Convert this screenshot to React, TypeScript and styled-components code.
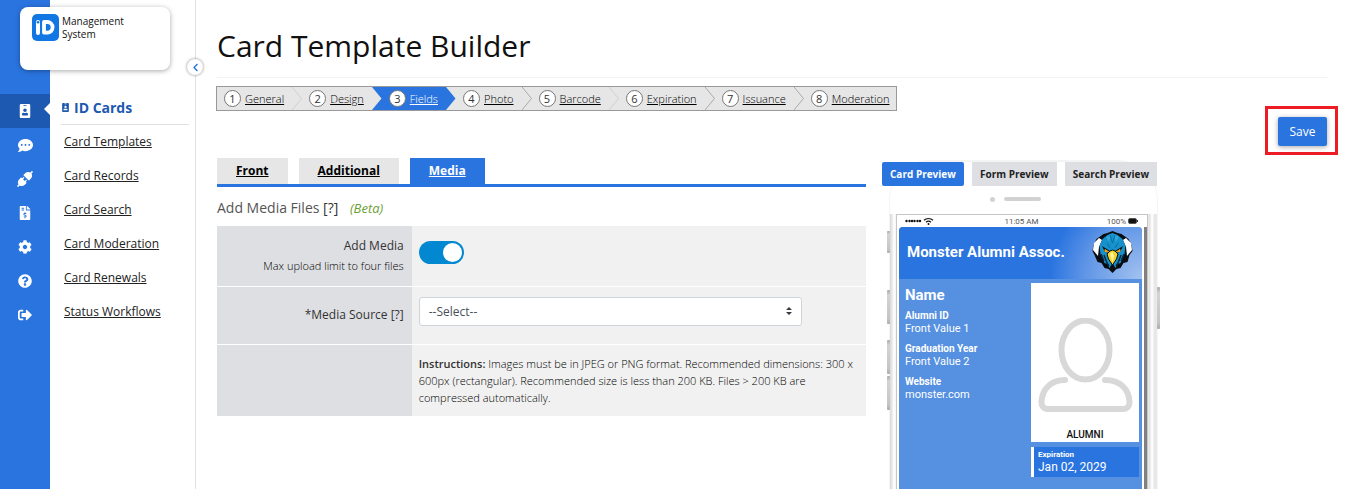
import React, { useState } from "react";
import styled, { createGlobalStyle } from "styled-components";
import {
  FaIdBadge,
  FaCommentDots,
  FaFileInvoiceDollar,
  FaCog,
  FaQuestionCircle,
  FaSignOutAlt,
  FaChevronLeft,
} from "react-icons/fa";
import { AiFillApi } from "react-icons/ai";

const blue = "#2a74e0";
const darkBlue = "#1d59b0";

const GlobalStyle = createGlobalStyle`
  * { box-sizing: border-box; }
  body { margin: 0; font-family: "Open Sans", sans-serif; font-size: 12px; color: #333; background: #fff; }
  button, select, input { font: inherit; }
`;

const Shell = styled.div`
  display: flex;
  position: relative;
  height: 100vh;
  overflow: hidden;
`;

const Rail = styled.nav`
  flex: 0 0 50px;
  padding-top: 94px;
  background: ${blue};
`;

const RailLink = styled.a<{ $active?: boolean }>`
  position: relative;
  display: flex;
  align-items: center;
  justify-content: center;
  height: 34px;
  color: #fff;
  font-size: 14px;
  background: ${(p) => (p.$active ? darkBlue : "transparent")};
  &::after {
    content: "";
    display: ${(p) => (p.$active ? "block" : "none")};
    position: absolute;
    right: 0;
    top: 9px;
    border: solid transparent;
    border-width: 6px 6px 6px 0;
    border-right-color: #fff;
  }
`;

const BrandCard = styled.header`
  position: absolute;
  left: 20px;
  top: 7px;
  display: flex;
  gap: 3px;
  width: 150px;
  height: 63px;
  padding: 7px 12px;
  border-radius: 8px;
  background: #fff;
  box-shadow: 0 1px 5px rgba(0, 0, 0, 0.35);
  color: #111;
  font-size: 10px;
  line-height: 13px;
`;

const BrandName = styled.span`
  padding-top: 1px;
`;

const Side = styled.aside`
  position: relative;
  flex: 0 0 146px;
  padding: 96px 6px 0 11px;
  border-right: 1px solid #e2e2e2;
`;

const SideTitle = styled.h2`
  display: flex;
  align-items: center;
  gap: 4px;
  height: 29px;
  margin: 0;
  padding-bottom: 5px;
  border-bottom: 1px solid #e0e0e0;
  color: ${darkBlue};
  font-size: 14px;
  font-weight: 700;
  & svg { font-size: 9px; }
`;

const SideLink = styled.a`
  display: block;
  padding-left: 3px;
  line-height: 34px;
  color: #222;
  font-size: 12px;
`;

const Collapse = styled.button`
  position: absolute;
  right: -8px;
  top: 59px;
  display: grid;
  place-items: center;
  width: 16px;
  height: 16px;
  padding: 0;
  border: 0;
  border-radius: 50%;
  background: #fff;
  box-shadow: 0 0 3px rgba(0, 0, 0, 0.5);
  color: ${blue};
  font-size: 9px;
`;

const Main = styled.main`
  flex: 1;
  min-width: 0;
  padding: 16px 20px 0 21px;
`;

const PageTitle = styled.h1`
  margin: 0;
  height: 62px;
  border-bottom: 1px solid #f3f3f3;
  color: #111;
  font-size: 30px;
  font-weight: 400;
  line-height: 60px;
`;

const TopRow = styled.div`
  display: flex;
  justify-content: space-between;
  align-items: flex-start;
  height: 80px;
  padding-top: 8px;
`;

const Steps = styled.nav`
  display: flex;
  height: 25px;
  margin-left: -1px;
  border: 1px solid #999;
  background: #e6e6e6;
`;

const Step = styled.div<{ $active?: boolean; $last?: boolean }>`
  display: flex;
  align-items: center;
  gap: 4px;
  padding: 0 ${(p) => (p.$last ? 7 : 8)}px 0 7px;
  background: ${(p) => (p.$active ? blue : "#e6e6e6")};
  font-size: 11px;
  font-weight: 300;
  & a { color: ${(p) => (p.$active ? "#fff" : "#000")}; }
`;

const StepNumber = styled.span`
  display: grid;
  place-items: center;
  width: 17px;
  height: 17px;
  border: 1px solid #777;
  border-radius: 50%;
  background: #fff;
  color: #333;
  font-weight: 400;
  line-height: 15px;
`;

const SaveFrame = styled.div`
  margin: 20px -11px 0 0;
  padding: 8px 8px 6px 10px;
  border: 3px solid #ed1c24;
`;

const SaveButton = styled.button`
  display: block;
  width: 49px;
  height: 29px;
  padding: 0;
  border: 0;
  border-radius: 2px;
  background: ${blue};
  box-shadow: 0 1px 5px rgba(0, 0, 0, 0.35);
  color: #fff;
  font-size: 12px;
`;

const Columns = styled.div`
  display: grid;
  grid-template-columns: minmax(0, 649px) 275px;
  column-gap: 16px;
  align-items: start;
`;

const Tabs = styled.div`
  display: flex;
  gap: 11px;
  border-bottom: 3px solid ${blue};
`;

const Tab = styled.a<{ $active?: boolean }>`
  padding: 0 19px;
  background: ${(p) => (p.$active ? blue : "#e6e6e6")};
  color: ${(p) => (p.$active ? "#fff" : "#000")};
  font-weight: 700;
  line-height: 26px;
`;

const SectionTitle = styled.h3`
  margin: 0;
  color: #555;
  font-size: 14px;
  font-weight: 400;
  line-height: 41px;
  height: 39px;
`;

const HelpLink = styled.a`
  color: #333;
  text-decoration: none;
`;

const Beta = styled.em`
  margin-left: 8px;
  color: #6ba134;
  font-size: 13px;
`;

const FieldTable = styled.table`
  width: 100%;
  border-collapse: collapse;
  table-layout: fixed;
`;

const FieldRow = styled.tr<{ $height: number }>`
  height: ${(p) => p.$height}px;
  & + & { border-top: 1px solid #fff; }
`;

const FieldName = styled.th`
  width: 30%;
  padding: 0 8px 0 0;
  background: #dedfe3;
  font-weight: 400;
  text-align: right;
  line-height: 20px;
`;

const FieldValue = styled.td`
  padding: 0 7px;
  background: #f1f1f1;
`;

const Hint = styled.div`
  color: #000;
  font-size: 11px;
  font-weight: 300;
`;

const Switch = styled.input`
  display: block;
  appearance: none;
  width: 45px;
  height: 23px;
  margin: 0 0 7px;
  padding: 2px;
  border-radius: 12px;
  background: #aaa;
  &::before {
    content: "";
    display: block;
    width: 19px;
    height: 19px;
    border-radius: 50%;
    background: #fff;
  }
  &:checked { background: #0288d1; }
  &:checked::before { margin-left: 22px; }
`;

const SelectBox = styled.div`
  display: grid;
  align-items: center;
  width: 383px;
  max-width: 100%;
  margin-bottom: 8px;
  & > * { grid-area: 1 / 1; }
  & svg { justify-self: end; margin-right: 10px; pointer-events: none; }
`;

const Select = styled.select`
  appearance: none;
  width: 100%;
  height: 29px;
  padding: 0 9px;
  border: 1px solid #ced4da;
  border-radius: 3px;
  background: #fff;
  color: #495057;
`;

const Instructions = styled.p`
  margin: 0;
  color: #000;
  font-size: 11px;
  font-weight: 300;
  line-height: 17px;
  & b { color: #333; font-weight: 600; }
`;

const Preview = styled.section`
  padding-top: 4px;
`;

const PreviewTabs = styled.div`
  position: relative;
  z-index: 1;
  display: flex;
  justify-content: space-between;
`;

const PreviewTab = styled.button<{ $active?: boolean }>`
  height: 24px;
  padding: 0 8px;
  border: 0;
  border-radius: ${(p) => (p.$active ? 2 : 0)}px;
  background: ${(p) => (p.$active ? blue : "#dedfe3")};
  color: ${(p) => (p.$active ? "#fff" : "#222")};
  font-size: 10px;
  font-weight: 700;
  white-space: nowrap;
`;

const Phone = styled.div`
  position: relative;
  width: 269px;
  margin: -26px 0 0 7px;
  border: solid #f4f4f4;
  border-width: 2px 1px 0;
  border-radius: 40px 40px 0 0;
`;

const Speaker = styled.div`
  display: flex;
  align-items: center;
  gap: 9px;
  height: 52px;
  padding: 22px 0 0 100px;
  &::before { content: ""; width: 5px; height: 5px; border-radius: 50%; background: #d2d2d2; }
  &::after { content: ""; width: 37px; height: 4px; border-radius: 2px; background: #d2d2d2; }
`;

const SideKey = styled.i<{ $top: number; $height: number; $right?: boolean }>`
  position: absolute;
  top: ${(p) => p.$top}px;
  ${(p) => (p.$right ? "right: -3px" : "left: -3px")};
  width: 3px;
  height: ${(p) => p.$height}px;
  border-radius: 1px;
  background: linear-gradient(#aaa, #d4d4d4 15%, #c4c4c4 85%, #aaa);
`;

const Chassis = styled.div`
  padding: 0 9px 0 6px;
  background: linear-gradient(90deg, #d8d8d8 0, #e8e8e8 2px, #fff 4px, #f3f3f3 6px, #f3f3f3 calc(100% - 9px), #ddd calc(100% - 8px), #fff calc(100% - 5px), #e4e4e4 calc(100% - 2px), #ececec 100%);
`;

const Screen = styled.div`
  border: 1px solid #c6c6c6;
  border-bottom: 0;
  background: #fff;
  font-family: Roboto, sans-serif;
`;

const StatusBar = styled.div`
  display: grid;
  grid-template-columns: 1fr auto 1fr;
  align-items: center;
  height: 12px;
  padding: 0 9px 0 8px;
  color: #555;
  font-size: 8px;
`;

const Battery = styled.span`
  display: flex;
  align-items: center;
  justify-content: flex-end;
  gap: 2px;
`;

const Scroller = styled.div`
  padding: 0 2px;
  border-right: 3px solid #808080;
`;

const MemberCard = styled.article`
  height: 420px;
  border-radius: 4px 4px 0 0;
  overflow: hidden;
  background: #5590e1;
  color: #fff;
`;

const CardHeader = styled.header`
  display: flex;
  align-items: center;
  justify-content: space-between;
  height: 52px;
  padding: 0 9px 2px 8px;
  background: radial-gradient(circle at 100% 100%, #a3c2f0 0, #5f95e6 58px, ${blue} 92px);
  font-size: 15px;
  font-weight: 700;
`;

const CardBody = styled.div`
  display: grid;
  grid-template-columns: 1fr 108px;
  padding: 4px 3px 0 6px;
`;

const CardName = styled.div`
  margin-bottom: 3px;
  font-size: 15px;
  font-weight: 700;
  line-height: 24px;
`;

const CardField = styled.dl`
  margin: 0 0 8px;
  font-size: 11px;
  line-height: 13px;
  & dt { font-size: 10px; font-weight: 700; line-height: 12px; }
  & dd { margin: 0; }
`;

const Portrait = styled.figure`
  display: flex;
  flex-direction: column;
  align-items: center;
  justify-content: flex-end;
  height: 159px;
  margin: 0 0 5px;
  padding-bottom: 1px;
  background: #fff;
  color: #111;
  font-size: 10px;
  font-weight: 500;
  line-height: 13px;
  & svg { margin-bottom: 16px; }
`;

const Expiry = styled.div`
  height: 30px;
  padding: 2px 0 0 4px;
  border-left: 3px solid #fff;
  background: ${blue};
  font-size: 12px;
  line-height: 14px;
  & b { display: block; font-size: 8px; line-height: 11px; }
`;

const railItems = [
  { label: "ID cards", icon: <FaIdBadge /> },
  { label: "Messages", icon: <FaCommentDots size={15} /> },
  { label: "Integrations", icon: <AiFillApi size={20} /> },
  { label: "Billing", icon: <FaFileInvoiceDollar /> },
  { label: "Settings", icon: <FaCog /> },
  { label: "Help", icon: <FaQuestionCircle /> },
  { label: "Sign out", icon: <FaSignOutAlt /> },
];

const sideLinks = ["Card Templates", "Card Records", "Card Search", "Card Moderation", "Card Renewals", "Status Workflows"];
const steps = ["General", "Design", "Fields", "Photo", "Barcode", "Expiration", "Issuance", "Moderation"];
const currentStep = 2;
const cardFields = [
  ["Alumni ID", "Front Value 1"],
  ["Graduation Year", "Front Value 2"],
  ["Website", "monster.com"],
];

const stepColor = (i: number) => (i === currentStep ? blue : "#e6e6e6");

function Chevron({ index }: { index: number }) {
  const touchesActive = index === currentStep || index + 1 === currentStep;
  return (
    <svg width="10" height="23" viewBox="0 0 10 23" aria-hidden="true">
      <rect width="10" height="23" fill={stepColor(index + 1)} />
      <path d="M0 0L9.500 11.500L0 23Z" fill={stepColor(index)} />
      {!touchesActive && (
        <path d="M0 0L9.500 11.500L0 23" fill="none" stroke={index === 0 || index === 4 ? "#cfcfcf" : "#aaa"} />
      )}
    </svg>
  );
}

function BrandMark() {
  return (
    <svg width="27" height="27" viewBox="0 0 27 27" aria-label="iD">
      <rect width="27" height="27" rx="5" fill="#1276e3" />
      <rect x="4" y="6" width="4" height="15" rx="2" fill="#fff" />
      <circle cx="6" cy="8.300" r="1.300" fill="#1276e3" />
      <path d="M12 8h3.300a5.200 5.200 0 0 1 0 10.600H12z" fill="none" stroke="#fff" strokeWidth="3.800" strokeLinejoin="round" />
    </svg>
  );
}

function EagleLogo() {
  return (
    <svg width="41" height="42" viewBox="0 0 41 42" aria-label="Eagle mascot">
      <path d="M20.500 0l5 2 4 1 7 5 3 6 1 6-3 4-2 7-4 1-3 5-4 1-4 4-4-4-4-1-3-5-4-1-3-7-2-4 1-6 3-6 7-5 4-1z" fill="#0a0d12" />
      <path d="M7 7L2 12l-1 7 5 6 1-9 3-7zM34 7l5 5 1 7-5 6-1-9-3-7z" fill="#fff" />
      <path d="M20.500 2l5 2 5 4 3 7-1 8-4 9-3 1-2 4-3-5-3 5-2-4-3-1-4-9-1-8 3-7 5-4z" fill="#1691cc" />
      <path d="M14 6l5-3-2 8zM27 6l-5-3 2 8z" fill="#2fa7dc" />
      <path d="M10 15l8 5 2.500 1 2.500-1 8-5-3 6-5 1-2.500-1-2.500 1-5-1z" fill="#0a0d12" />
      <path d="M13 18.500l4 2.500-4-.5zM28 18.500l-4 2.500 4-.5z" fill="#f0a419" stroke="#f0a419" />
      <path d="M12 24l3 8 2 3M29 24l-3 8-2 3M9 23l3 7M32 23l-3 7" fill="none" stroke="#06283c" strokeWidth="1.500" />
      <path d="M18 4l2.500 8L23 4M15 12l3 5M26 12l-3 5" fill="none" stroke="#0b6ea0" />
      <path d="M15 23l3-3 2.500-1 2.500 1 3 3-1.500 5-4 6-4-6z" fill="#f4d52c" stroke="#0a0d12" />
      <path d="M18 23l2.500-2 1.500 4-1.500 6z" fill="#fff3a0" />
    </svg>
  );
}

function PersonOutline() {
  return (
    <svg width="95" height="94" viewBox="0 0 95 94" fill="none" stroke="#d8d8d8" strokeWidth="6" strokeLinecap="round" aria-hidden="true">
      <ellipse cx="47.500" cy="32" rx="24" ry="29.500" />
      <path d="M27 62C13 62 4 71 3.500 84c0 4 2 7 6 7h76c4 0 6-3 6-7C91 71 82 62 67 62" />
    </svg>
  );
}

function Signal() {
  return (
    <svg width="30" height="8" viewBox="0 0 30 8" aria-label="Signal">
      {[1, 4, 6.500, 9, 12, 14.500].map((x) => (
        <circle key={x} cx={x + 0.5} cy="4" r="1.200" fill="#111" />
      ))}
      <path d="M19 3.300a6.500 6.500 0 0 1 9 0M21 5.200a3.800 3.800 0 0 1 5 0" fill="none" stroke="#111" strokeWidth="1.200" />
      <circle cx="23.500" cy="6.900" r="1" fill="#111" />
    </svg>
  );
}

export default function App() {
  const [mediaOn, setMediaOn] = useState(true);

  return (
    <>
      <GlobalStyle />
      <Shell>
        <Rail>
          {railItems.map((item, i) => (
            <RailLink key={item.label} href="#" aria-label={item.label} $active={i === 0}>
              {item.icon}
            </RailLink>
          ))}
        </Rail>

        <Side>
          <SideTitle><FaIdBadge />ID Cards</SideTitle>
          <nav>
            {sideLinks.map((label) => (
              <SideLink key={label} href="#">{label}</SideLink>
            ))}
          </nav>
          <Collapse aria-label="Collapse menu"><FaChevronLeft /></Collapse>
        </Side>

        <BrandCard>
          <BrandMark />
          <BrandName>Management<br />System</BrandName>
        </BrandCard>

        <Main>
          <PageTitle>Card Template Builder</PageTitle>
          <TopRow>
            <Steps>
              {steps.map((label, i) => (
                <React.Fragment key={label}>
                  <Step $active={i === currentStep} $last={i === steps.length - 1}>
                    <StepNumber>{i + 1}</StepNumber>
                    <a href="#">{label}</a>
                  </Step>
                  {i < steps.length - 1 && <Chevron index={i} />}
                </React.Fragment>
              ))}
            </Steps>
            <SaveFrame>
              <SaveButton>Save</SaveButton>
            </SaveFrame>
          </TopRow>

          <Columns>
            <section>
              <Tabs>
                <Tab href="#">Front</Tab>
                <Tab href="#">Additional</Tab>
                <Tab href="#" $active>Media</Tab>
              </Tabs>
              <SectionTitle>
                Add Media Files <HelpLink href="#">[?]</HelpLink> <Beta>(Beta)</Beta>
              </SectionTitle>
              <FieldTable>
                <tbody>
                  <FieldRow $height={60}>
                    <FieldName scope="row">
                      <label htmlFor="add-media">Add Media</label>
                      <Hint>Max upload limit to four files</Hint>
                    </FieldName>
                    <FieldValue>
                      <Switch id="add-media" type="checkbox" checked={mediaOn} onChange={() => setMediaOn(!mediaOn)} />
                    </FieldValue>
                  </FieldRow>
                  <FieldRow $height={58}>
                    <FieldName scope="row">
                      <label htmlFor="media-source">*Media Source</label> <HelpLink href="#">[?]</HelpLink>
                    </FieldName>
                    <FieldValue>
                      <SelectBox>
                        <Select id="media-source"><option>--Select--</option></Select>
                        <svg width="6" height="8" viewBox="0 0 6 8" fill="#343a40"><path d="M3 0l3 3H0zM0 5h6L3 8z" /></svg>
                      </SelectBox>
                    </FieldValue>
                  </FieldRow>
                  <FieldRow $height={72}>
                    <FieldName />
                    <FieldValue>
                      <Instructions>
                        <b>Instructions:</b> Images must be in JPEG or PNG format. Recommended dimensions: 300 x 600px (rectangular). Recommended size is less than 200 KB. Files &gt; 200 KB are compressed automatically.
                      </Instructions>
                    </FieldValue>
                  </FieldRow>
                </tbody>
              </FieldTable>
            </section>

            <Preview>
              <PreviewTabs>
                <PreviewTab $active>Card Preview</PreviewTab>
                <PreviewTab>Form Preview</PreviewTab>
                <PreviewTab>Search Preview</PreviewTab>
              </PreviewTabs>
              <Phone>
                <SideKey $top={69} $height={22} />
                <SideKey $top={128} $height={34} />
                <SideKey $top={178} $height={34} />
                <SideKey $top={214} $height={34} />
                <SideKey $top={125} $height={42} $right />
                <Speaker />
                <Chassis>
                  <Screen>
                    <StatusBar>
                      <Signal />
                      <span>11:05 AM</span>
                      <Battery>
                        100%
                        <svg width="10" height="6" viewBox="0 0 10 6"><rect x=".5" y=".5" width="8" height="5" rx="1.500" fill="#111" stroke="#555" /><rect x="9" y="2" width="1" height="2" fill="#333" /></svg>
                      </Battery>
                    </StatusBar>
                    <Scroller>
                      <MemberCard>
                        <CardHeader>
                          <span>Monster Alumni Assoc.</span>
                          <EagleLogo />
                        </CardHeader>
                        <CardBody>
                          <div>
                            <CardName>Name</CardName>
                            {cardFields.map(([name, value]) => (
                              <CardField key={name}>
                                <dt>{name}</dt>
                                <dd>{value}</dd>
                              </CardField>
                            ))}
                          </div>
                          <div>
                            <Portrait>
                              <PersonOutline />
                              <figcaption>ALUMNI</figcaption>
                            </Portrait>
                            <Expiry><b>Expiration</b>Jan 02, 2029</Expiry>
                          </div>
                        </CardBody>
                      </MemberCard>
                    </Scroller>
                  </Screen>
                </Chassis>
              </Phone>
            </Preview>
          </Columns>
        </Main>
      </Shell>
    </>
  );
}
